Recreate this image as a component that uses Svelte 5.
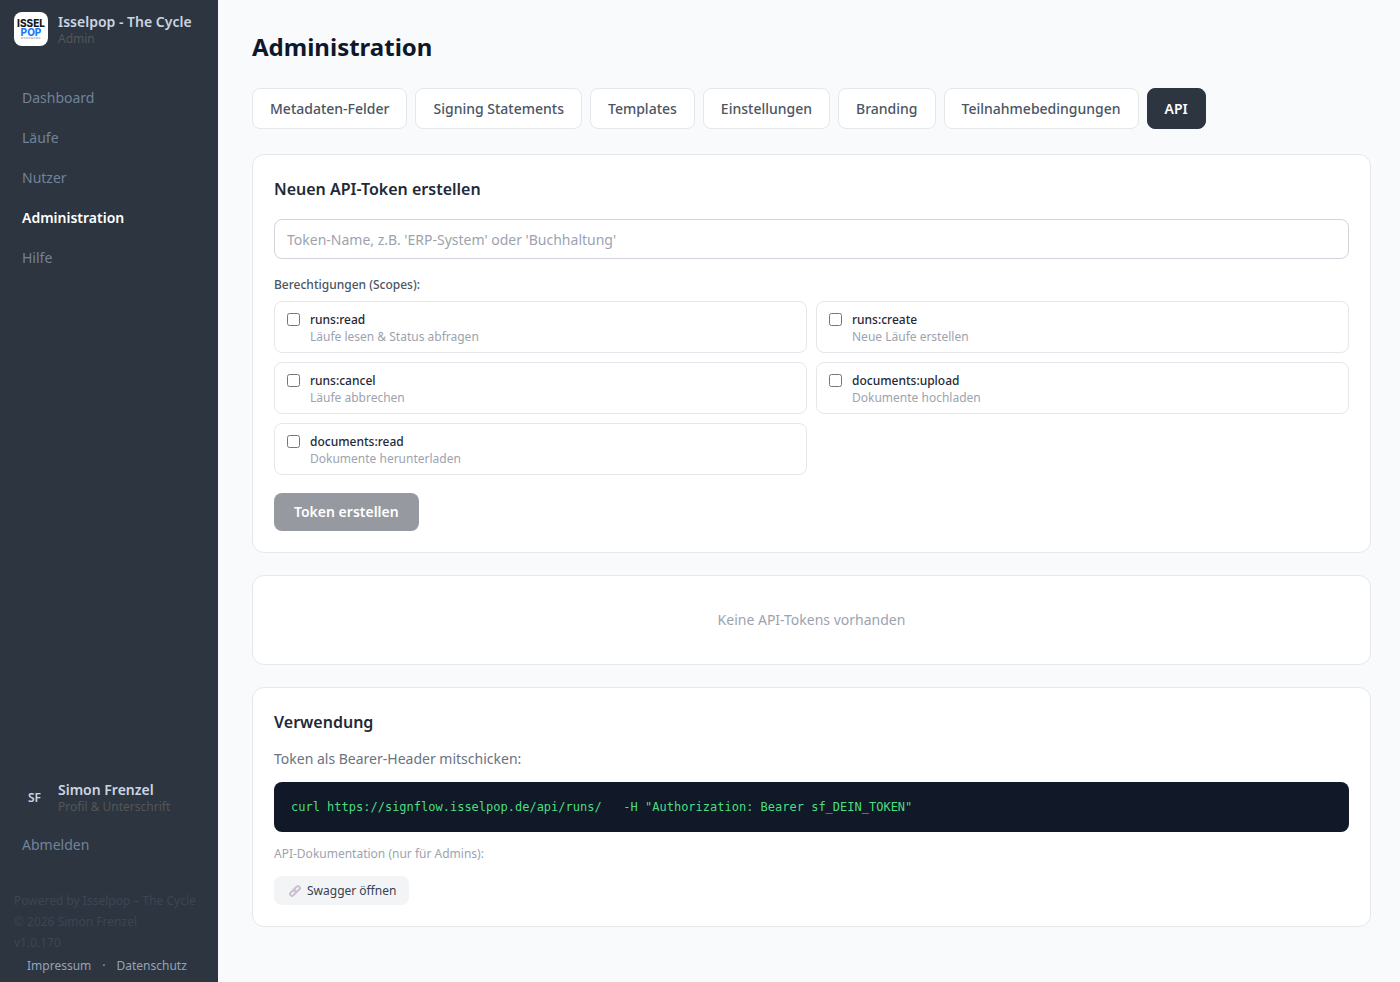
<script>
  const navItems = ['Dashboard', 'Läufe', 'Nutzer', 'Administration', 'Hilfe'];
  let activeNav = $state('Administration');

  const tabs = [
    'Metadaten-Felder',
    'Signing Statements',
    'Templates',
    'Einstellungen',
    'Branding',
    'Teilnahmebedingungen',
    'API',
  ];
  let activeTab = $state('API');

  const scopes = [
    { id: 'runs:read', label: 'Läufe lesen & Status abfragen' },
    { id: 'runs:create', label: 'Neue Läufe erstellen' },
    { id: 'runs:cancel', label: 'Läufe abbrechen' },
    { id: 'documents:upload', label: 'Dokumente hochladen' },
    { id: 'documents:read', label: 'Dokumente herunterladen' },
  ];

  let tokenName = $state('');
  let selected = $state([]);
  let canCreate = $derived(tokenName.trim() !== '' && selected.length > 0);

  const curlExample =
    'curl https://signflow.isselpop.de/api/runs/   -H "Authorization: Bearer sf_DEIN_TOKEN"';
</script>

<div class="layout">
  <aside class="sidebar">
    <div class="brand">
      <svg class="logo" viewBox="0 0 34 34" aria-hidden="true">
        <rect width="34" height="34" rx="8" fill="#fff" />
        <text x="17" y="15" text-anchor="middle" font-size="10" fill="#15181e">ISSEL</text>
        <text x="17" y="24" text-anchor="middle" font-size="10" fill="#1f7cf5">POP</text>
        <path d="M7 26h20" stroke="#8d99ab" stroke-width="1" stroke-dasharray="2 .5" />
      </svg>
      <div class="two-line">
        <strong>Isselpop - The Cycle</strong>
        <span>Admin</span>
      </div>
    </div>

    <nav class="nav">
      {#each navItems as item}
        <a href="#{item.toLowerCase()}" class:active={item === activeNav} onclick={() => (activeNav = item)}>{item}</a>
      {/each}
    </nav>

    <div class="account">
      <a class="profile" href="#profil">
        <span class="avatar">SF</span>
        <span class="two-line">
          <strong>Simon Frenzel</strong>
          <span>Profil &amp; Unterschrift</span>
        </span>
      </a>
      <button class="logout" type="button">Abmelden</button>
    </div>

    <footer>
      <p>Powered by Isselpop – The Cycle</p>
      <p>© 2026 Simon Frenzel</p>
      <p>v1.0.170</p>
      <div class="legal">
        <a href="#impressum">Impressum</a>
        <span>·</span>
        <a href="#datenschutz">Datenschutz</a>
      </div>
    </footer>
  </aside>

  <main>
    <h1>Administration</h1>

    <div class="tabs">
      {#each tabs as tab}
        <button type="button" class:active={tab === activeTab} onclick={() => (activeTab = tab)}>{tab}</button>
      {/each}
    </div>

    <form class="card" onsubmit={(e) => e.preventDefault()}>
      <h2>Neuen API-Token erstellen</h2>
      <input
        class="token-name"
        type="text"
        aria-label="Token-Name"
        placeholder="Token-Name, z.B. 'ERP-System' oder 'Buchhaltung'"
        bind:value={tokenName}
      />
      <fieldset>
        <legend>Berechtigungen (Scopes):</legend>
        <div class="scopes">
          {#each scopes as scope}
            <label class="scope">
              <input type="checkbox" value={scope.id} bind:group={selected} />
              <span class="scope-text">
                <span class="scope-id">{scope.id}</span>
                <span class="scope-label">{scope.label}</span>
              </span>
            </label>
          {/each}
        </div>
      </fieldset>
      <button class="create" type="submit" disabled={!canCreate}>Token erstellen</button>
    </form>

    <section class="card empty">Keine API-Tokens vorhanden</section>

    <section class="card">
      <h2 class="usage-title">Verwendung</h2>
      <p class="hint">Token als Bearer-Header mitschicken:</p>
      <pre><code>{curlExample}</code></pre>
      <p class="docs">API-Dokumentation (nur für Admins):</p>
      <a class="swagger" href="#swagger">
        <svg viewBox="0 0 14 14" aria-hidden="true">
          <g fill="none" stroke-linecap="round" transform="rotate(-45 7 7)">
            <g stroke="#b3a4b8" stroke-width="2">
              <rect x="0" y="4.800" width="7.600" height="4.400" rx="2.200" />
              <rect x="6.400" y="4.800" width="7.600" height="4.400" rx="2.200" />
            </g>
            <g stroke="#d6c8db" stroke-width="1.200">
              <rect x="0" y="4.800" width="7.600" height="4.400" rx="2.200" />
              <rect x="6.400" y="4.800" width="7.600" height="4.400" rx="2.200" />
            </g>
          </g>
        </svg>
        Swagger öffnen
      </a>
    </section>
  </main>
</div>

<style>
  :global(body) {
    margin: 0;
    background: #f8fafc;
  }

  .layout {
    display: flex;
    min-height: 100vh;
    font-family: 'Segoe UI', 'Noto Sans', sans-serif;
    font-size: 14px;
    color: #1f2937;
  }

  .layout * {
    box-sizing: border-box;
  }

  button,
  input {
    font: inherit;
  }

  a {
    text-decoration: none;
  }

  h1,
  h2,
  p,
  pre {
    margin: 0;
  }

  /* Sidebar */
  .sidebar {
    display: flex;
    flex-direction: column;
    flex: none;
    width: 218px;
    padding: 12px 0 6px;
    background: #2d3540;
  }

  .brand {
    display: flex;
    gap: 10px;
    padding: 0 14px;
  }

  .logo {
    flex: none;
    width: 34px;
    height: 34px;
    font-family: 'Inter', sans-serif;
    font-weight: 800;
  }

  .two-line {
    display: flex;
    flex-direction: column;
    white-space: nowrap;
  }

  .two-line strong {
    font-size: 14px;
    line-height: 19px;
    font-weight: 600;
    color: #cbd5e1;
  }

  .two-line span {
    font-size: 12px;
    line-height: 16px;
    color: #555558;
  }

  .nav {
    display: flex;
    flex-direction: column;
    gap: 4px;
    margin-top: 33px;
  }

  .nav a {
    padding: 8px 22px;
    line-height: 20px;
    color: #718399;
  }

  .nav a.active {
    font-weight: 600;
    color: #fff;
  }

  .account {
    margin-top: auto;
  }

  .profile {
    display: flex;
    align-items: center;
    gap: 6px;
    padding: 0 17px;
  }

  .avatar {
    width: 35px;
    font-size: 12px;
    font-weight: 600;
    text-align: center;
    color: #cbd5e1;
  }

  .logout {
    display: block;
    margin-top: 12px;
    padding: 8px 22px;
    border: 0;
    background: none;
    line-height: 20px;
    color: #718399;
    cursor: pointer;
  }

  footer {
    margin-top: 27px;
    padding: 0 14px;
    font-size: 12px;
    line-height: 21px;
    color: #3d4556;
    white-space: nowrap;
  }

  .legal {
    display: flex;
    gap: 11px;
    padding-left: 13px;
    margin-top: 2px;
    color: #94a3b8;
  }

  .legal a {
    color: #94a3b8;
  }

  /* Content */
  main {
    flex: 1;
    min-width: 0;
    padding: 30px 29px 30px 34px;
  }

  h1 {
    font-size: 24px;
    line-height: 34px;
    font-weight: 700;
    color: #0f172a;
  }

  .tabs {
    display: flex;
    flex-wrap: wrap;
    gap: 8px;
    margin: 24px 0 25px;
  }

  .tabs button {
    padding: 9px 17px;
    border: 1px solid #e5e7eb;
    border-radius: 8px;
    background: #fff;
    line-height: 21px;
    font-weight: 500;
    color: #4b5563;
    cursor: pointer;
  }

  .tabs button.active {
    border-color: #2d3540;
    background: #2d3540;
    font-weight: 600;
    color: #fff;
  }

  .card {
    margin-bottom: 22px;
    padding: 21px;
    border: 1px solid #e5e7eb;
    border-radius: 12px;
    background: #fff;
  }

  h2 {
    margin-bottom: 16px;
    font-size: 16px;
    line-height: 27px;
    font-weight: 600;
    color: #1f2937;
  }

  .token-name {
    display: block;
    width: 100%;
    height: 40px;
    padding: 0 12px;
    border: 1px solid #d1d5db;
    border-radius: 8px;
    background: #fff;
    color: #1f2937;
  }

  .token-name::placeholder {
    color: #9ca3af;
  }

  fieldset {
    margin: 16px 0 18px;
    padding: 0;
    border: 0;
  }

  legend {
    padding: 0 0 6px;
    font-size: 12px;
    line-height: 20px;
    font-weight: 500;
    color: #4b5563;
  }

  .scopes {
    display: grid;
    grid-template-columns: 1fr 1fr;
    gap: 9px;
  }

  .scope {
    display: flex;
    gap: 10px;
    padding: 9px 12px 7px;
    border: 1px solid #e5e7eb;
    border-radius: 8px;
    cursor: pointer;
  }

  .scope input {
    flex: none;
    width: 13px;
    height: 13px;
    margin: 2px 0;
  }

  .scope-text {
    display: flex;
    flex-direction: column;
    font-size: 12px;
    line-height: 17px;
  }

  .scope-id {
    font-weight: 500;
    color: #1f2937;
  }

  .scope-label {
    color: #9ca3af;
  }

  .create {
    display: block;
    padding: 9px 20px;
    border: 0;
    border-radius: 8px;
    background: #2d3540;
    line-height: 20px;
    font-weight: 600;
    color: #fff;
    cursor: pointer;
  }

  .create:disabled {
    background: #969aa0;
    cursor: default;
  }

  .empty {
    padding: 34px 21px;
    line-height: 20px;
    text-align: center;
    color: #9ca3af;
  }

  .usage-title {
    margin-bottom: 12px;
  }

  .hint {
    line-height: 22px;
    color: #6b7280;
  }

  pre {
    margin: 12px 0;
    padding: 16px 17px;
    border-radius: 8px;
    background: #111827;
    font-family: Consolas, 'DejaVu Sans Mono', monospace;
    font-size: 12px;
    line-height: 18px;
    color: #4ade80;
    overflow-x: auto;
  }

  code {
    font: inherit;
  }

  .docs {
    margin-bottom: 12px;
    font-size: 12px;
    line-height: 20px;
    color: #9ca3af;
  }

  .swagger {
    display: flex;
    align-items: center;
    gap: 6px;
    width: fit-content;
    padding: 4px 13px 4px 15px;
    border-radius: 8px;
    background: #f3f4f6;
    font-size: 12px;
    line-height: 21px;
    color: #374151;
  }

  .swagger svg {
    width: 12px;
    height: 12px;
  }
</style>
